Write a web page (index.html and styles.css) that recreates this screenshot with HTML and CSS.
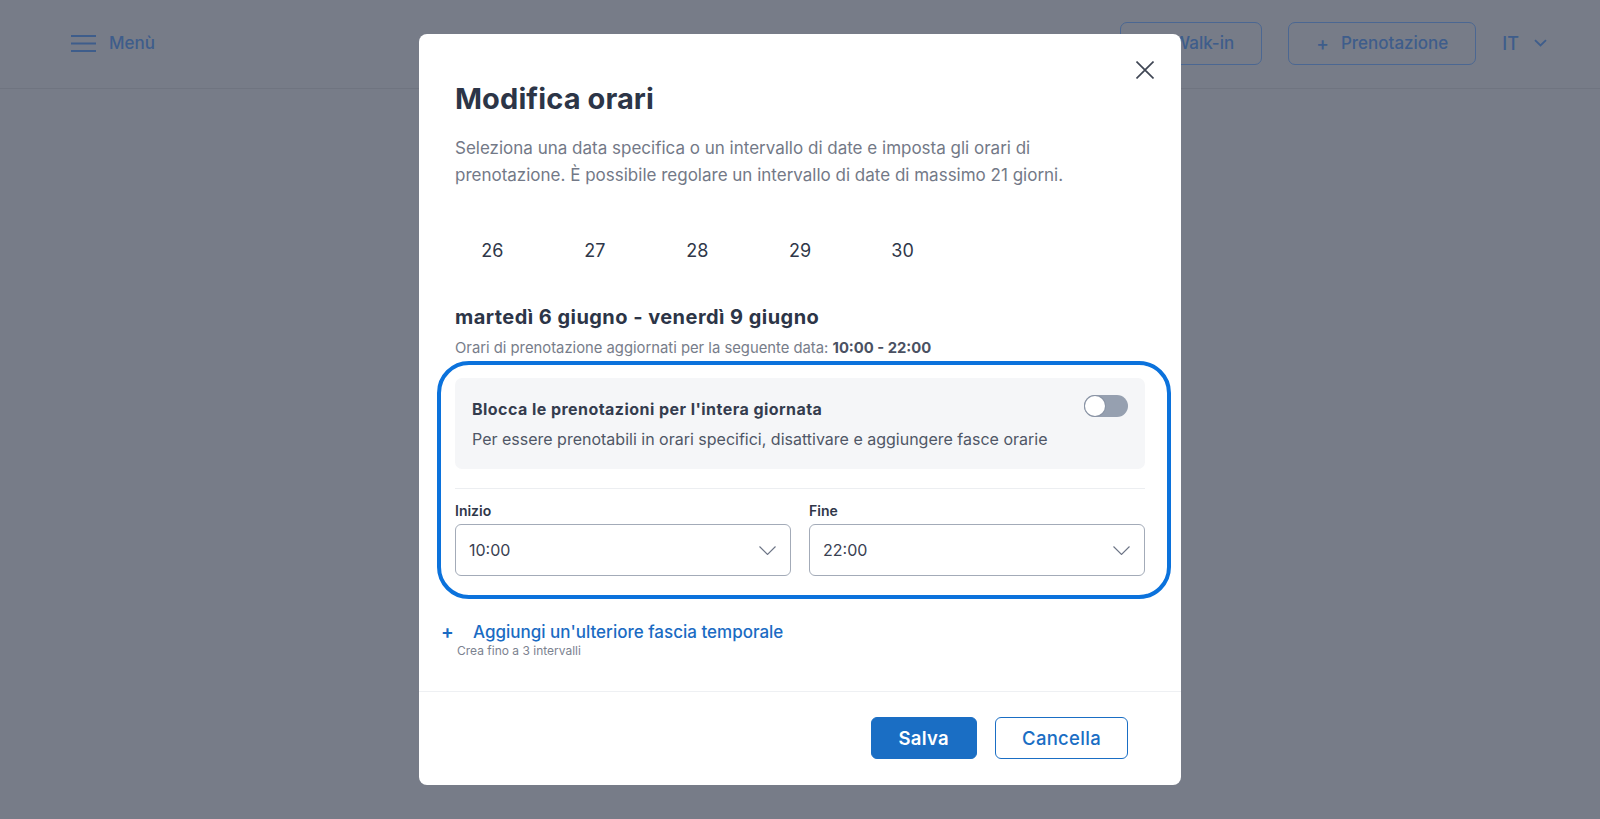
FILE: index.html
```html
<!DOCTYPE html>
<html lang="it">
<head>
<meta charset="utf-8">
<title>Modifica orari</title>
<link rel="stylesheet" href="styles.css">
</head>
<body>
<header class="topbar">
  <button class="menu-btn" type="button">
    <svg class="menu-icon" width="25" height="17" viewBox="0 0 25 17" aria-hidden="true">
      <path d="M0 1h25M0 8.5h25M0 16h25" stroke="currentColor" stroke-width="2" fill="none"/>
    </svg>
    <span>Menù</span>
  </button>
  <div class="top-actions">
    <button class="top-btn" type="button"><span class="plus">+</span>Walk-in</button>
    <button class="top-btn" type="button"><span class="plus">+</span>Prenotazione</button>
    <button class="lang-btn" type="button">IT
      <svg width="13" height="8" viewBox="0 0 13 8" aria-hidden="true"><path d="M1 1.2l5.5 5.3L12 1.2" stroke="currentColor" stroke-width="1.8" fill="none"/></svg>
    </button>
  </div>
</header>

<div class="overlay">
  <div class="modal" role="dialog" aria-labelledby="modal-title">
    <button class="modal-close" type="button" aria-label="Chiudi">
      <svg width="18" height="18" viewBox="0 0 18 18" aria-hidden="true"><path d="M0.5 0.5l17 17M17.5 0.5l-17 17" stroke="currentColor" stroke-width="1.6" fill="none"/></svg>
    </button>
    <div class="modal-body">
      <h1 class="modal-title" id="modal-title">Modifica orari</h1>
      <p class="modal-desc">Seleziona una data specifica o un intervallo di date e imposta gli orari di prenotazione. È possibile regolare un intervallo di date di massimo 21 giorni.</p>

      <div class="cal-row">
        <span class="cal-day">26</span>
        <span class="cal-day">27</span>
        <span class="cal-day">28</span>
        <span class="cal-day">29</span>
        <span class="cal-day">30</span>
        <span class="cal-day"></span>
        <span class="cal-day"></span>
      </div>

      <h2 class="range-title">martedì 6 giugno - venerdì 9 giugno</h2>
      <p class="range-sub">Orari di prenotazione aggiornati per la seguente data: <strong>10:00 - 22:00</strong></p>

      <div class="slot">
        <div class="block-card">
          <div class="block-head">
            <span class="block-title">Blocca le prenotazioni per l'intera giornata</span>
            <span class="toggle"><span class="knob"></span></span>
          </div>
          <p class="block-desc">Per essere prenotabili in orari specifici, disattivare e aggiungere fasce orarie</p>
        </div>
        <div class="divider"></div>
        <div class="times">
          <div class="field">
            <span class="field-label">Inizio</span>
            <div class="select"><span>10:00</span>
              <svg width="17" height="9" viewBox="0 0 17 9" aria-hidden="true"><path d="M0.5 0.5l8 8 8-8" stroke="currentColor" stroke-width="1.1" fill="none"/></svg>
            </div>
          </div>
          <div class="field">
            <span class="field-label">Fine</span>
            <div class="select"><span>22:00</span>
              <svg width="17" height="9" viewBox="0 0 17 9" aria-hidden="true"><path d="M0.5 0.5l8 8 8-8" stroke="currentColor" stroke-width="1.1" fill="none"/></svg>
            </div>
          </div>
        </div>
        <div class="slot-highlight"></div>
      </div>

      <a class="add-link" href="#"><span class="add-plus">+</span>Aggiungi un'ulteriore fascia temporale</a>
      <p class="add-hint">Crea fino a 3 intervalli</p>
    </div>
    <div class="modal-footer">
      <button class="btn-primary" type="button">Salva</button>
      <button class="btn-secondary" type="button">Cancella</button>
    </div>
  </div>
</div>
</body>
</html>
```

FILE: styles.css
```css
* { box-sizing: border-box; }

html, body {
  margin: 0;
  height: 100%;
}

body {
  background: #777c88;
  font-family: Inter, "Liberation Sans", sans-serif;
  color: #2c3547;
}

button {
  font-family: inherit;
  cursor: pointer;
}

/* ---------- top bar (under the overlay) ---------- */
.topbar {
  height: 89px;
  border-bottom: 1px solid #6f7480;
  display: flex;
  align-items: center;
  justify-content: space-between;
  padding: 0 53px 2px 71px;
}

.menu-btn {
  display: flex;
  align-items: center;
  gap: 13px;
  background: none;
  border: 0;
  padding: 0;
  color: #3e5d8b;
  font-size: 17px;
  font-weight: 500;
}

.top-actions {
  display: flex;
  align-items: center;
  gap: 26px;
}

.top-btn {
  height: 43px;
  padding: 0 27px;
  border: 1px solid #4b6792;
  border-radius: 7px;
  background: transparent;
  color: #3e5d8b;
  font-size: 17px;
  font-weight: 500;
  display: flex;
  align-items: center;
}

.top-btn .plus {
  font-size: 19px;
  margin-right: 12px;
}

.lang-btn {
  display: flex;
  align-items: center;
  gap: 15px;
  background: none;
  border: 0;
  padding: 0;
  color: #3e5d8b;
  font-size: 18px;
  font-weight: 500;
}

/* ---------- modal ---------- */
.overlay {
  position: fixed;
  inset: 0;
  display: flex;
  align-items: center;
  justify-content: center;
}

.modal {
  position: relative;
  width: 762px;
  background: #fff;
  border-radius: 8px;
}

.modal-close {
  position: absolute;
  top: 27px;
  right: 27px;
  width: 18px;
  height: 18px;
  padding: 0;
  border: 0;
  background: none;
  color: #3f4654;
  display: flex;
}

.modal-body {
  padding: 47px 36px 33px;
}

.modal-title {
  margin: 0;
  font-size: 29px;
  line-height: 36px;
  font-weight: 700;
  color: #2c3547;
  letter-spacing: 0.1px;
}

.modal-desc {
  margin: 18px 0 0;
  max-width: 640px;
  font-size: 17px;
  line-height: 26.5px;
  color: #737987;
}

.cal-row {
  display: grid;
  grid-template-columns: repeat(7, 1fr);
  margin: 42px -14px 0;
  height: 40px;
  align-items: center;
}

.cal-day {
  text-align: center;
  font-size: 18px;
  color: #2f3749;
}

.range-title {
  margin: 33px 0 0;
  font-size: 20px;
  line-height: 28px;
  font-weight: 700;
  letter-spacing: 0.45px;
  color: #2c3547;
}

.range-sub {
  margin: 7px 0 0;
  font-size: 14.8px;
  line-height: 20px;
  color: #777d8a;
}

.range-sub strong {
  color: #4a5162;
  font-weight: 700;
}

/* ---------- time slot ---------- */
.slot {
  position: relative;
  margin-top: 20px;
}

.slot-highlight {
  position: absolute;
  left: -18px;
  right: -26px;
  top: -17px;
  bottom: -23px;
  border: 4px solid #0b72dc;
  border-radius: 32px;
  pointer-events: none;
}

.block-card {
  background: #f5f6f8;
  border-radius: 7px;
  padding: 19px 17px 18px;
}

.block-head {
  display: flex;
  align-items: center;
  justify-content: space-between;
}

.block-title {
  font-size: 16px;
  line-height: 24px;
  font-weight: 700;
  letter-spacing: 0.45px;
  color: #343c4e;
}

.toggle {
  width: 44px;
  height: 22px;
  border-radius: 11px;
  background: #96a0b0;
  display: flex;
  align-items: center;
  padding: 0 1px;
  margin-top: -6px;
}

.knob {
  width: 20px;
  height: 20px;
  border-radius: 50%;
  background: #fff;
  box-shadow: 0 0 0 1px #8a94a5;
}

.block-desc {
  margin: 6px 0 0;
  font-size: 16px;
  line-height: 24px;
  color: #4f5666;
}

.divider {
  height: 1px;
  background: #eceef1;
  margin-top: 19px;
}

.times {
  display: grid;
  grid-template-columns: 1fr 1fr;
  gap: 18px;
  margin-top: 12px;
}

.field-label {
  display: block;
  font-size: 14px;
  line-height: 20px;
  font-weight: 600;
  color: #2f3749;
  margin-bottom: 3px;
}

.select {
  height: 52px;
  border: 1px solid #a3abb8;
  border-radius: 6px;
  display: flex;
  align-items: center;
  justify-content: space-between;
  padding: 0 14px 0 13px;
  font-size: 16px;
  color: #394152;
}

.select svg {
  color: #6c7486;
}

.add-link {
  display: flex;
  align-items: center;
  margin-top: 44px;
  margin-left: -14px;
  font-size: 17px;
  line-height: 24px;
  font-weight: 500;
  color: #1a6bc3;
  text-decoration: none;
}

.add-plus {
  width: 32px;
  font-size: 19px;
  font-weight: 600;
}

.add-hint {
  margin: 0;
  padding-left: 2px;
  font-size: 12px;
  line-height: 14px;
  color: #7c8290;
}

/* ---------- footer ---------- */
.modal-footer {
  border-top: 1px solid #eef0f3;
  padding: 25px 53px 26px;
  display: flex;
  justify-content: flex-end;
  gap: 18px;
}

.btn-primary,
.btn-secondary {
  height: 42px;
  border-radius: 6px;
  font-size: 18.5px;
  letter-spacing: 0.3px;
}

.btn-primary {
  padding: 0 27px;
  border: 1px solid #1a6ec4;
  background: #1a6ec4;
  color: #fff;
  font-weight: 600;
}

.btn-secondary {
  padding: 0 26px;
  border: 1px solid #1a6ec4;
  background: #fff;
  color: #1a6ec4;
  font-weight: 500;
}
```
